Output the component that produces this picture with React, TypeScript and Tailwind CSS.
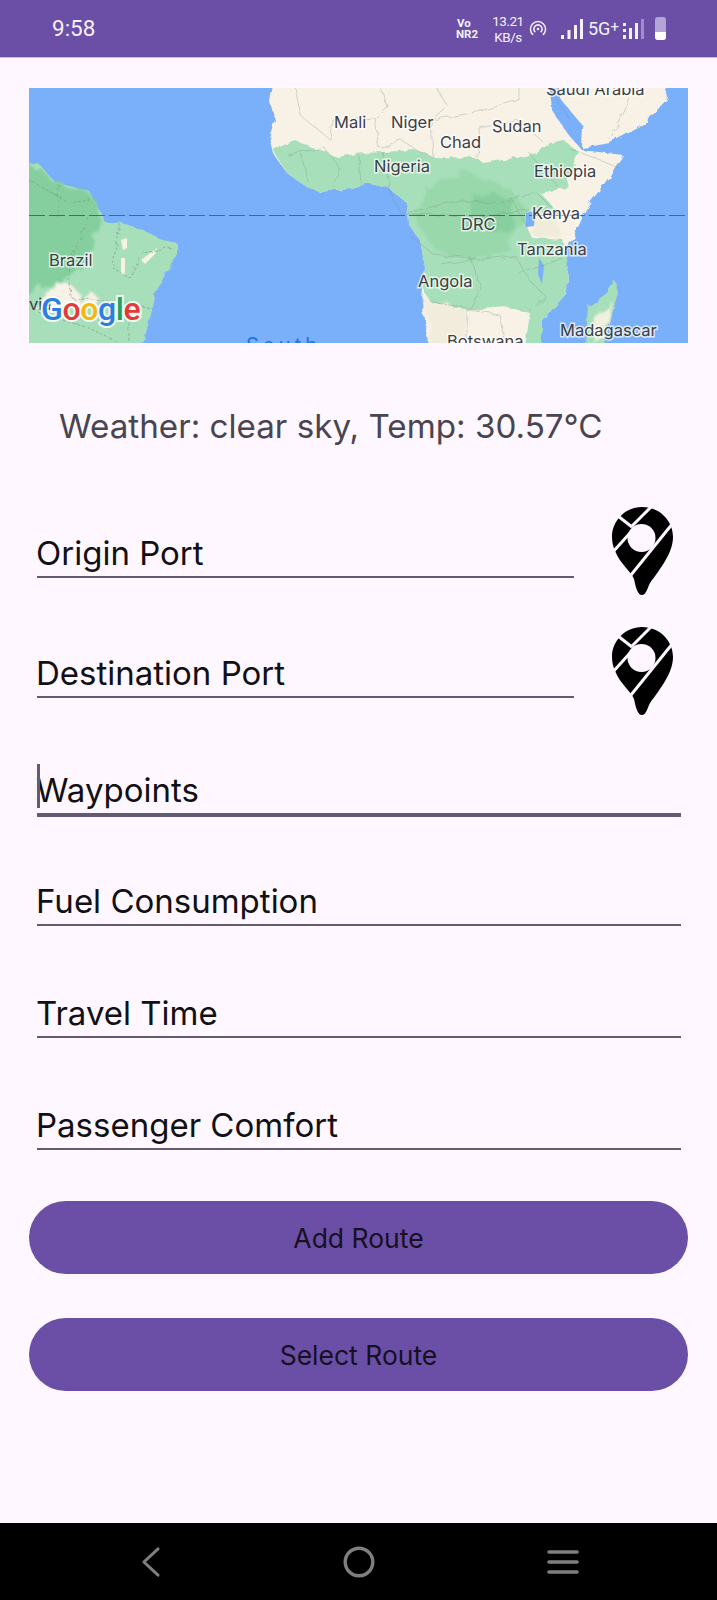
const labelStyle = "fill-[#3c4043] [paint-order:stroke] stroke-white/70 stroke-[3px] text-[16.5px] [font-family:Inter,sans-serif]";

const mapLabels = [
  { name: "Saudi Arabia", x: 517, y: 7 },
  { name: "Mali", x: 305, y: 40 },
  { name: "Niger", x: 362, y: 40 },
  { name: "Sudan", x: 463, y: 44 },
  { name: "Chad", x: 411, y: 60 },
  { name: "Nigeria", x: 345, y: 84 },
  { name: "Ethiopia", x: 505, y: 89 },
  { name: "Kenya", x: 503, y: 131 },
  { name: "DRC", x: 432, y: 142 },
  { name: "Tanzania", x: 488, y: 167 },
  { name: "Angola", x: 389, y: 199 },
  { name: "Madagascar", x: 531, y: 248 },
  { name: "Botswana", x: 418, y: 259 },
  { name: "Brazil", x: 20, y: 178 },
];

const borders = [
  "M266 0L272 28L302 52L304 32L346 30L358 18L352 0",
  "M346 30L350 60L372 52L388 62L404 69",
  "M404 69L402 32L418 18L408 0",
  "M402 32L448 24L490 12L490 0",
  "M448 70L450 40L490 32L514 54",
  "M258 66L296 60L310 80L306 100",
  "M272 66L280 96M330 68L332 98",
  "M354 64L362 106L372 126L432 112L470 116L490 106",
  "M378 126L444 128L500 122",
  "M384 150L404 166L442 170L452 200L440 222",
  "M410 176L442 172L486 168L500 190",
  "M498 139L482 110L508 105L528 125",
  "M490 186L534 170M498 190L516 208L500 225",
  "M438 222L438 255M438 222L470 226L476 255",
  "M402 214L450 222",
  "M500 65L530 100M540 60L590 80",
  "M520 0L540 30M581 52L600 10",
];

const brazilBorders = [
  "M0 92L40 115L62 112M30 96L28 128",
  "M60 130L40 175L42 210L100 215L122 220",
  "M90 134L84 180L100 190L114 165L145 160",
  "M10 225L60 240L90 255M100 215L100 255",
];

function MapPreview() {
  return (
    <svg viewBox="0 0 659 255" className="block h-[255px] w-[659px] bg-[#7aaff9]">
      <defs>
        <filter id="rough" x="-5%" y="-5%" width="110%" height="110%">
          <feTurbulence type="fractalNoise" baseFrequency="0.09" numOctaves="3" seed="4" />
          <feDisplacementMap in="SourceGraphic" scale="6" />
        </filter>
        <filter id="soft" x="-10%" y="-10%" width="120%" height="120%">
          <feTurbulence type="fractalNoise" baseFrequency="0.07" numOctaves="3" seed="9" />
          <feDisplacementMap in="SourceGraphic" scale="16" />
          <feGaussianBlur stdDeviation="0.8" />
        </filter>
      </defs>

      {/* land */}
      <g filter="url(#rough)">
        <path d="M-20 72L11 77L24 92L41 98L61 104L69 120L74 127L76 134L91 134L114 142L134 152L148 155L148 169L138 185L128 199L124 219L116 249L108 275L-20 275Z" fill="#a6dfb9" />
        <path d="M247 -20L241 14L246 32L240 49L244 65L258 85L278 99L291 104L321 100L341 95L358 99L378 115L379 135L391 152L396 179L393 212L396 239L404 275L513 275L513 232L538 205L539 182L534 169L551 135L558 119L578 92L594 67L553 62L538 45L523 22L519 -20Z" fill="#f7f1e6" />
        <path d="M531 10L543 25L554 38L553 60L581 55L611 39L638 9L631 -20L528 -20Z" fill="#f7f1e6" />
        <path d="M244 62L266 52L308 69L334 65L354 64L388 62L404 69L448 70L454 75L488 70L508 65L521 55L534 52L551 65L538 92L541 99L511 105L521 115L528 125L498 139L503 150L534 152L538 169L539 182L538 205L513 232L513 275L494 275L501 225L478 219L438 222L401 214L396 205L396 179L391 152L379 135L378 115L358 99L341 95L321 100L291 104L278 99L258 85Z" fill="#a6dfb9" />
        <path d="M586 192L589 205L584 222L574 260L556 260L559 219L578 205Z" fill="#a6dfb9" />
      </g>

      {/* vegetation */}
      <g filter="url(#soft)">
        <path d="M574 220L582 210L576 240L566 255L562 240Z" fill="#f2efdd" />
        <path d="M400 100L440 84L480 100L498 122L478 160L444 174L404 160L384 130Z" fill="#98d8ab" />
        <path d="M444 105L482 108L484 142L462 146L440 128Z" fill="#88cfa0" />
        <path d="M-20 76L11 79L24 94L41 100L61 106L69 120L70 134L64 150L58 176L30 195L-20 210Z" fill="#85cf9f" />
        <path d="M6 220L28 194L46 200L48 212L62 204L68 208L66 218L40 218L26 226Z" fill="#f7f1e6" />
        <path d="M396 212L438 222L440 262L404 262Z" fill="#f2ecdc" />
        <path d="M502 118L526 124L532 150L505 150Z" fill="#f0ecd9" />
      </g>
      <path d="M92 152L98 150L98 160L94 162ZM92 170L96 170L96 186L92 186ZM112 172L128 160L126 166L116 176Z" fill="#f7f1e6" />

      {/* lakes */}
      <path d="M497 125L506 123L505 138L497 139ZM510 170L515 178L513 196L509 186Z" fill="#7aaff9" />

      {/* borders */}
      <g filter="url(#rough)" fill="none" stroke="#7b8a7a" strokeOpacity="0.4" strokeWidth="0.8">
        {borders.map((d) => (
          <path key={d} d={d} />
        ))}
        {brazilBorders.map((d) => (
          <path key={d} d={d} strokeDasharray="3 2" strokeOpacity="0.7" />
        ))}
      </g>

      {/* equator */}
      <line x1="0" y1="127.5" x2="659" y2="127.5" stroke="#56627a" strokeWidth="1" strokeDasharray="16 4" />

      {mapLabels.map((l) => (
        <text key={l.name} x={l.x} y={l.y} className={labelStyle}>
          {l.name}
        </text>
      ))}
      <text x="217" y="264" className="fill-[#1a73e8] text-[20px] tracking-[4px] [font-family:Inter,sans-serif]">
        South
      </text>
      <text x="0" y="222" className="fill-[#3c4043] text-[16.5px] [font-family:Inter,sans-serif]">
        via
      </text>
      <text x="12" y="232" className="stroke-white/80 stroke-[4px] tracking-[-0.4px] [paint-order:stroke] text-[32px] font-medium [font-family:Roboto,sans-serif]">
        <tspan fill="#2f7de1">G</tspan>
        <tspan fill="#e53935">o</tspan>
        <tspan fill="#f5b70a">o</tspan>
        <tspan fill="#2f7de1">g</tspan>
        <tspan fill="#1ea362">l</tspan>
        <tspan fill="#e53935">e</tspan>
      </text>
    </svg>
  );
}

function PinIcon() {
  return (
    <svg viewBox="20 10 66 92" className="h-[92px] w-[66px]">
      <path d="M52 12C70 12 83 26 83 42C83 58 70 74 60 88C57 94 56 100 52 100C48 100 46 94 44 84C42 78 30 68 26 58C23 52 22 47 22 42C22 26 35 12 52 12Z" fill="#000" />
      <circle cx="51.5" cy="43" r="14" fill="#fef7ff" />
      <g stroke="#fef7ff" strokeWidth="3">
        <path d="M28 21L42 32" />
        <path d="M62 11L41 32" />
        <path d="M22 58L40 38" />
        <path d="M41 80L83 28" />
      </g>
    </svg>
  );
}

function StatusBar() {
  return (
    <div className="flex h-[58px] items-center border-b border-[#c9bce0] bg-[#6b4ea6] pl-[52px] text-[#f5f1fb] [font-family:Roboto,sans-serif]">
      <span className="w-[404px] text-[22.5px]">9:58</span>
      <div className="flex w-[32px] flex-col text-[11.5px] leading-[11px] font-bold">
        <span className="pl-[1px]">Vo</span>
        <span>NR2</span>
      </div>
      <div className="flex w-[40px] flex-col items-center text-[13.5px] leading-[16px] tracking-[-0.5px]">
        <span>13.21</span>
        <span>KB/s</span>
      </div>
      {/* hotspot */}
      <svg viewBox="0 0 20 20" className="h-[18px] w-[20px]" fill="none" stroke="#f5f1fb" strokeWidth="1.7">
        <path d="M4.5 16.5a8.4 8.4 0 1 1 11 0" />
        <path d="M7 13.5a4.6 4.6 0 1 1 6 0" />
        <circle cx="10" cy="10" r="1.4" fill="#f5f1fb" stroke="none" />
      </svg>
      {/* signal */}
      <svg viewBox="0 0 22 20" className="ml-[13px] h-[20px] w-[22px]" fill="#f5f1fb">
        <rect x="0" y="16" width="3" height="4" />
        <rect x="6.5" y="11" width="3" height="9" />
        <rect x="13" y="6" width="3" height="14" />
        <rect x="19" y="0" width="3" height="20" />
      </svg>
      <span className="ml-[5px] w-[30px] text-[18px] whitespace-nowrap">
        5G<span className="relative -top-[3px] text-[15px]">+</span>
      </span>
      <svg viewBox="0 0 21 20" className="ml-[5px] h-[20px] w-[21px]" fill="#f5f1fb">
        <rect x="0" y="4" width="3" height="3" />
        <rect x="0" y="10" width="3" height="3" />
        <rect x="0" y="16" width="3" height="4" />
        <rect x="6" y="9" width="3" height="11" />
        <rect x="12" y="4" width="3" height="16" />
        <rect x="18" y="0" width="3" height="20" opacity="0.4" />
      </svg>
      {/* battery */}
      <div className="ml-[11px] flex h-[23px] w-[11px] flex-col justify-end overflow-hidden rounded-[3px] bg-[#b5a5d6]">
        <div className="h-[8px] bg-white" />
      </div>
    </div>
  );
}

function Field({ label, className = "" }: { label: string; className?: string }) {
  return (
    <div className={`ml-2 border-b-[2px] border-[#625b71] pb-[3px] ${className}`}>
      <div className="-ml-[1px] text-[33px] leading-[40px] text-[#111014]">{label}</div>
    </div>
  );
}

function RouteButton({ label, className = "" }: { label: string; className?: string }) {
  return (
    <button className={`flex h-[73px] w-full items-center justify-center rounded-full bg-[#6b4ea6] pt-[2px] text-[26.5px] text-[#16101f] ${className}`}>
      {label}
    </button>
  );
}

export default function App() {
  return (
    <div className="flex h-[1600px] w-[717px] flex-col bg-[#fef7ff] [font-family:Inter,sans-serif]">
      <StatusBar />

      <main className="flex-1 px-[29px]">
        <div className="mt-[30px]">
          <MapPreview />
        </div>

        <p className="mt-[63px] ml-[30px] text-[33.2px] leading-[40px] text-[#49454f]">
          Weather: clear sky, Temp: 30.57°C
        </p>

        <div className="mt-[59px] flex h-[92px] items-start">
          <Field label="Origin Port" className="mt-[28px] w-[537px]" />
          <div className="ml-[36px]">
            <PinIcon />
          </div>
        </div>
        <div className="mt-[28px] flex h-[92px] items-start">
          <Field label="Destination Port" className="mt-[28px] w-[537px]" />
          <div className="ml-[36px]">
            <PinIcon />
          </div>
        </div>

        <div className="relative mt-[53px]">
          <Field label="Waypoints" className="w-[644px] border-b-[4px]" />
          <span className="absolute top-[-6px] left-[8px] h-[44px] w-[3px] bg-[#625b71]" />
        </div>
        <Field label="Fuel Consumption" className="mt-[64px] w-[644px]" />
        <Field label="Travel Time" className="mt-[67px] w-[644px]" />
        <Field label="Passenger Comfort" className="mt-[67px] w-[644px]" />

        <RouteButton label="Add Route" className="mt-[51px]" />
        <RouteButton label="Select Route" className="mt-[44px]" />
      </main>

      <nav className="flex h-[77px] items-center bg-black">
        <svg viewBox="0 0 22 34" className="ml-[140px] h-[32px] w-[21px]" fill="none" stroke="#7f7f7f" strokeWidth="3.2" strokeLinecap="round" strokeLinejoin="round">
          <path d="M19 3L4 17L19 31" />
        </svg>
        <svg viewBox="0 0 32 32" className="ml-[182px] h-[32px] w-[32px]" fill="none" stroke="#7f7f7f" strokeWidth="3.4">
          <circle cx="16" cy="16" r="13.8" />
        </svg>
        <svg viewBox="0 0 32 26" className="ml-[172px] h-[26px] w-[32px]" fill="none" stroke="#7f7f7f" strokeWidth="3.6" strokeLinecap="round">
          <path d="M2 3H30M2 13H30M2 23H30" />
        </svg>
      </nav>
    </div>
  );
}
